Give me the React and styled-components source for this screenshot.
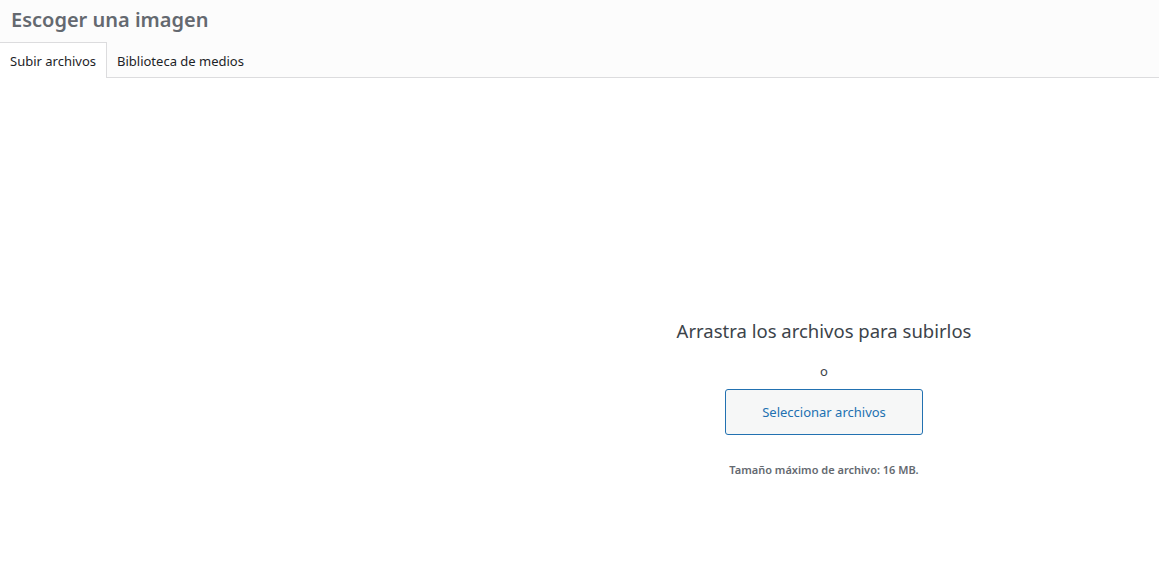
import React, { useState } from "react";
import styled, { createGlobalStyle } from "styled-components";

const GlobalStyle = createGlobalStyle`
  html, body {
    margin: 0;
    padding: 0;
    background: #fff;
    font-family: "Noto Sans", "Open Sans", sans-serif;
  }
`;

const Frame = styled.div`
  width: 1159px;
  height: 583px;
  display: flex;
  flex-direction: column;
  background: #fff;
`;

const TitleBar = styled.div`
  height: 42px;
  background: #fcfcfc;
  display: flex;
  align-items: center;
  padding-left: 11px;
`;

const Title = styled.h1`
  margin: 0;
  font-size: 20px;
  font-weight: 600;
  color: #646970;
  line-height: 1;
  margin-top: -3px;
`;

const Router = styled.div`
  height: 35px;
  background: #fcfcfc;
  display: flex;
  align-items: stretch;
  border-bottom: 1px solid #dcdcde;
`;

const Tab = styled.button`
  border: none;
  border-top: 1px solid ${({ active }) => (active ? "#dcdcde" : "transparent")};
  border-right: 1px solid ${({ active }) => (active ? "#dcdcde" : "transparent")};
  background: ${({ active }) => (active ? "#fff" : "transparent")};
  margin-bottom: -1px;
  padding: 0 10px;
  font-family: inherit;
  font-size: 13px;
  color: #1d2327;
  cursor: pointer;
`;

const Content = styled.div`
  flex: 1;
  display: flex;
  padding-left: 489px;
`;

const Uploader = styled.div`
  flex: 1;
  display: flex;
  flex-direction: column;
  align-items: center;
  padding-top: 240px;
`;

const DropText = styled.p`
  margin: 0;
  font-size: 18.5px;
  font-weight: 400;
  color: #3c434a;
`;

const OrText = styled.p`
  margin: 19px 0 9px;
  font-size: 13px;
  color: #3c434a;
`;

const SelectButton = styled.button`
  width: 198px;
  height: 46px;
  border: 1px solid #2271b1;
  border-radius: 3px;
  background: #f6f7f7;
  color: #2271b1;
  font-family: inherit;
  font-size: 13px;
  cursor: pointer;
`;

const MaxSize = styled.p`
  margin: 27px 0 0;
  font-size: 11px;
  font-weight: 600;
  color: #646970;
`;

export default function App() {
  const [tab, setTab] = useState("upload");
  return (
    <Frame>
      <GlobalStyle />
      <TitleBar>
        <Title>Escoger una imagen</Title>
      </TitleBar>
      <Router>
        <Tab active={tab === "upload"} onClick={() => setTab("upload")}>
          Subir archivos
        </Tab>
        <Tab active={tab === "library"} onClick={() => setTab("library")}>
          Biblioteca de medios
        </Tab>
      </Router>
      <Content>
        <Uploader>
          <DropText>Arrastra los archivos para subirlos</DropText>
          <OrText>o</OrText>
          <SelectButton>Seleccionar archivos</SelectButton>
          <MaxSize>Tamaño máximo de archivo: 16 MB.</MaxSize>
        </Uploader>
      </Content>
    </Frame>
  );
}
